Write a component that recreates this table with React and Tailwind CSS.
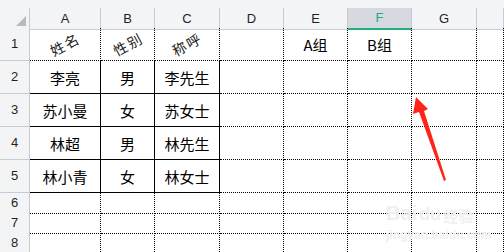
const cols = ["A", "B", "C", "D", "E", "F", "G", ""];

const rows = [
  { n: "1", h: "h-[33px]", cells: ["姓名", "性别", "称呼", "", "A组", "B组", "", ""], rot: true },
  { n: "2", h: "h-[33px]", cells: ["李亮", "男", "李先生", "", "", "", "", ""], table: true },
  { n: "3", h: "h-[33px]", cells: ["苏小曼", "女", "苏女士", "", "", "", "", ""], table: true },
  { n: "4", h: "h-[33px]", cells: ["林超", "男", "林先生", "", "", "", "", ""], table: true },
  { n: "5", h: "h-[33px]", cells: ["林小青", "女", "林女士", "", "", "", "", ""], table: true },
  { n: "6", h: "h-[20px]", cells: ["", "", "", "", "", "", "", ""] },
  { n: "7", h: "h-[20px]", cells: ["", "", "", "", "", "", "", ""] },
  { n: "8", h: "h-[20px]", cells: ["", "", "", "", "", "", "", ""] },
];

const gridCols = "grid grid-cols-[30px_71px_54px_65px_64px_64px_64px_65px_1fr]";
const dotted = "border-r border-b border-dotted border-black";
const solid = "border-r border-b border-solid border-black";
const headBox = "bg-[#f3f4f6] border-r border-b border-[#c6cbd4] flex items-center justify-center text-[13px] text-[#1f1f1f] font-['Liberation_Sans',sans-serif]";

const Arrow = () => (
  <svg className="absolute left-0 top-0 pointer-events-none" width="504" height="252" viewBox="0 0 504 252">
    <polygon points="416,97 428,109 424,111 446,180 444,181 419,112 413,114" fill="#ff2418" />
  </svg>
);

// faint site watermark, bottom right
const Watermark = () => (
  <div className="absolute left-[386px] top-[203px] pointer-events-none text-[#f0f0f0] font-['Liberation_Sans',sans-serif] leading-none">
    <div className="flex items-end gap-[2px]">
      <span className="text-[20px] font-bold">Bai</span>
      <span className="text-[18px] font-bold">du</span>
      <span className="text-[15px] font-bold font-['Noto_Sans_CJK_SC',sans-serif]">经验</span>
    </div>
    <div className="text-[12px] font-bold mt-[6px]">jingyan.baidu.com</div>
  </div>
);

export default function App() {
  return (
    <div className="relative w-[504px] h-[252px] overflow-hidden bg-white font-['Noto_Sans_CJK_SC',sans-serif]">
      <div className="h-[8px] bg-[#f3f4f6]" />
      <div className={`${gridCols} h-[20px]`}>
        <div className="bg-[#f3f4f6] border-r border-b border-[#c6cbd4] flex items-end justify-end pr-[3px] pb-[3px]">
          <svg width="10" height="10" viewBox="0 0 10 10">
            <polygon points="10,0 10,10 0,10" fill="#b5b9c1" />
          </svg>
        </div>
        {cols.map((c, i) =>
          c === "F" ? (
            <div
              key={i}
              className="bg-[#d6d9df] border-r border-[#c6cbd4] border-b-2 border-b-[#1fb27a] flex items-center justify-center text-[13px] text-[#1fae78] font-['Liberation_Sans',sans-serif]"
            >
              {c}
            </div>
          ) : (
            <div key={i} className={headBox}>
              {c}
            </div>
          )
        )}
      </div>
      {rows.map((r) => (
        <div key={r.n} className={`${gridCols} ${r.h}`}>
          <div className={headBox}>{r.n}</div>
          {r.cells.map((t, i) => (
            <div
              key={i}
              className={`${r.table && i < 3 ? solid : dotted} flex items-center justify-center text-[15px] leading-none text-black`}
            >
              {r.rot && i < 3 ? (
                <span className="inline-block rotate-[-28deg] text-[14px] tracking-[2px] text-[#222]">{t}</span>
              ) : (
                t
              )}
            </div>
          ))}
        </div>
      ))}
      <Arrow />
      <Watermark />
    </div>
  );
}
